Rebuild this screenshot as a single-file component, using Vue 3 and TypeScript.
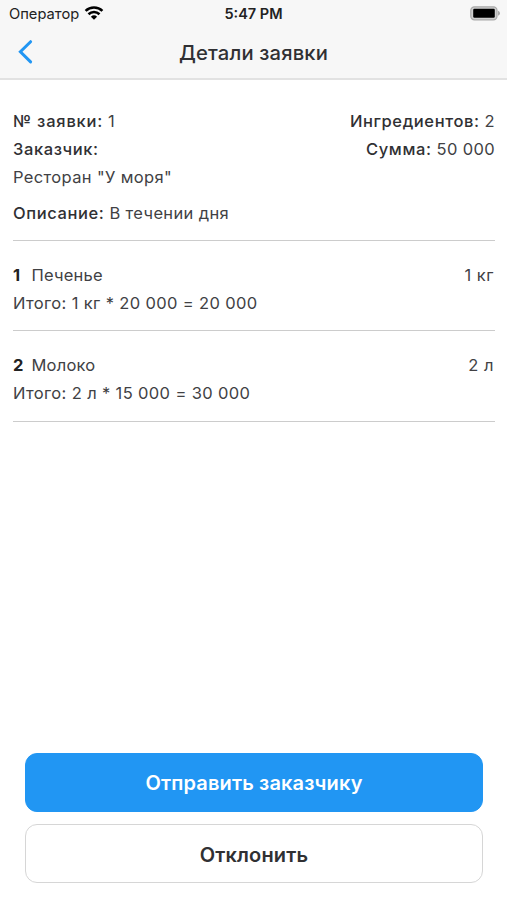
<script setup lang="ts">
interface Item {
  name: string
  qty: number
  unit: string
  price: number
}

const items: Item[] = [
  { name: 'Печенье', qty: 1, unit: 'кг', price: 20000 },
  { name: 'Молоко', qty: 2, unit: 'л', price: 15000 },
]

const fmt = (n: number): string => String(n).replace(/\B(?=(\d{3})+$)/g, ' ')
const total = items.reduce((sum, i) => sum + i.qty * i.price, 0)
</script>

<template>
  <div class="screen">
    <header class="header">
      <div class="status">
        <div class="carrier">
          <span>Оператор</span>
          <svg class="wifi" width="20" height="14" viewBox="0 0 20 14">
            <path d="M1.6 4.9a12.2 12.2 0 0 1 16.8 0M4.5 8.2a8 8 0 0 1 11 0" fill="none" stroke="#000" stroke-width="2.6" />
            <path d="M10 13.8L6.9 10.7a4.5 4.5 0 0 1 6.2 0z" />
          </svg>
        </div>
        <span class="time">5:47 PM</span>
        <svg class="battery" width="31" height="15" viewBox="0 0 31 15">
          <rect x="0.8" y="0.8" width="26.2" height="13" rx="3.6" fill="#d0d0d0" stroke="#aaa" stroke-width="1.2" />
          <rect x="3.2" y="2.8" width="21.6" height="9" rx="1.2" />
          <path d="M28 4.8q2 .9 2 2.5T28 9.8z" fill="#aaa" />
        </svg>
      </div>
      <div class="nav">
        <svg class="back" width="16" height="26" viewBox="0 0 16 26">
          <path d="M13.6 2.7L3.4 12.8l10.2 10.1" fill="none" stroke="#2196f3" stroke-width="3" stroke-linecap="round" />
        </svg>
        <h1>Детали заявки</h1>
      </div>
    </header>

    <main class="content">
      <section class="summary">
        <div class="row"><span><b class="number">№ заявки:</b> 1</span><span><b>Ингредиентов:</b> {{ items.length }}</span></div>
        <div class="row"><b>Заказчик:</b><span><b>Сумма:</b> {{ fmt(total) }}</span></div>
        <div class="row">Ресторан "У моря"</div>
        <div class="row description"><span><b>Описание:</b> В течении дня</span></div>
      </section>
      <section v-for="(item, i) in items" :key="item.name" class="item">
        <div class="row">
          <span class="name"><strong>{{ i + 1 }}</strong>{{ item.name }}</span>
          <span class="qty">{{ item.qty }} {{ item.unit }}</span>
        </div>
        <div class="row">Итого: {{ item.qty }} {{ item.unit }} * {{ fmt(item.price) }} = {{ fmt(item.qty * item.price) }}</div>
      </section>
    </main>

    <footer class="actions">
      <button class="primary" type="button">Отправить заказчику</button>
      <button class="secondary" type="button">Отклонить</button>
    </footer>
  </div>
</template>

<style>
body { background: #fff; }
</style>

<style scoped>
.screen {
  box-sizing: border-box;
  display: flex;
  flex-direction: column;
  height: 900px;
  color: #414144;
  font-family: Inter, "Liberation Sans", sans-serif;
  overflow: hidden;
}
.header {
  box-sizing: border-box;
  height: 80px;
  background: #f7f7f7;
  border-bottom: 2px solid #e2e2e2;
}
.status {
  display: grid;
  grid-template-columns: 1fr auto 1fr;
  align-items: center;
  height: 27px;
  padding: 0 6px 0 9px;
  color: #222;
  font-size: 14.7px;
}
.carrier { display: flex; align-items: center; gap: 5px; }
.wifi { margin-top: -2px; }
.time { margin: 0 3px 0 0; font-weight: 600; font-size: 14.5px; }
.battery { justify-self: end; }
.nav {
  display: grid;
  grid-template-columns: 40px 1fr 40px;
  align-items: center;
  height: 50px;
}
.back { margin-left: 16.5px; }
h1 {
  margin: 0;
  color: #303033;
  text-align: center;
  font-size: 20.2px;
  font-weight: 500;
  letter-spacing: 0.15px;
}
.content {
  flex: 1;
  padding: 27px 12px 0 13px;
  font-size: 16.5px;
  line-height: 28px;
  letter-spacing: 0.36px;
}
.row { display: flex; justify-content: space-between; white-space: nowrap; }
b { color: #303033; font-weight: 500; letter-spacing: 0.6px; }
.number { letter-spacing: 0.8px; }
.name { display: grid; grid-template-columns: 18.5px auto; letter-spacing: 0.22px; }
.qty { padding-right: 1px; letter-spacing: 0.5px; }
strong { color: #222; font-weight: 700; }
.summary { height: 133px; border-bottom: 1px solid #ccc; }
.description { margin-top: 8px; }
.item { box-sizing: border-box; height: 90px; padding-top: 20px; border-bottom: 1px solid #ccc; }
.item:last-child { height: 91px; }
.actions { display: flex; flex-direction: column; gap: 12px; padding: 0 24px 17px 25px; }
button {
  box-sizing: border-box;
  height: 59px;
  padding: 1px 0 0;
  border: 1px solid #d6d6d6;
  border-radius: 12px;
  font: 600 20px Inter, sans-serif;
  letter-spacing: 0.15px;
}
.primary { background: #2196f3; border-color: #2196f3; color: #fff; }
.secondary { padding-top: 2px; background: #fff; color: #303033; }
</style>
